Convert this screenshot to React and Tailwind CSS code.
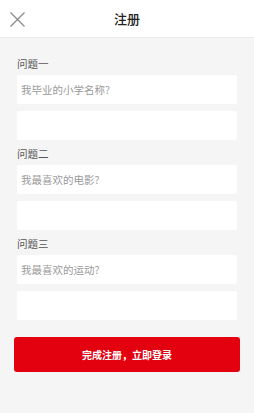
import React from "react";

const questions = [
  { label: "问题一", placeholder: "我毕业的小学名称?" },
  { label: "问题二", placeholder: "我最喜欢的电影?" },
  { label: "问题三", placeholder: "我最喜欢的运动?" },
];

export default function App() {
  return (
    <div
      className="w-[254px] h-[413px] bg-[#f5f5f5] flex flex-col"
      style={{ fontFamily: '"Noto Sans CJK SC", "Noto Sans", sans-serif' }}
    >
      {/* Header */}
      <div className="relative h-[38px] bg-white border-b border-[#ebebeb] flex items-center justify-center">
        <button className="absolute left-[9px] top-[11px] w-[17px] h-[17px]">
          <svg viewBox="0 0 17 17" width="17" height="17">
            <path d="M1.5 1.5 L15.5 15.5 M15.5 1.5 L1.5 15.5" stroke="#8a8a8a" strokeWidth="1.3" fill="none" />
          </svg>
        </button>
        <h1 className="text-[13px] font-medium text-[#222]">注册</h1>
      </div>

      {/* Form */}
      <div className="px-[17px] pt-[15px] flex flex-col">
        {questions.map((q, idx) => (
          <div key={idx} className="flex flex-col mb-[3px]">
            <div className="h-[22px] flex items-center text-[10.5px] text-[#555]">{q.label}</div>
            <input
              placeholder={q.placeholder}
              className="h-[29px] bg-white rounded-[2px] px-[4px] text-[10.5px] text-[#333] placeholder:text-[#9a9a9a] outline-none"
            />
            <input className="h-[29px] mt-[7px] bg-white rounded-[2px] px-[4px] text-[10.5px] text-[#333] outline-none" />
          </div>
        ))}
      </div>

      <div className="px-[14px] pt-[14px]">
        <button className="w-full h-[35px] bg-[#e3000f] rounded-[3px] text-white text-[10px] font-semibold">
          完成注册，立即登录
        </button>
      </div>
    </div>
  );
}
